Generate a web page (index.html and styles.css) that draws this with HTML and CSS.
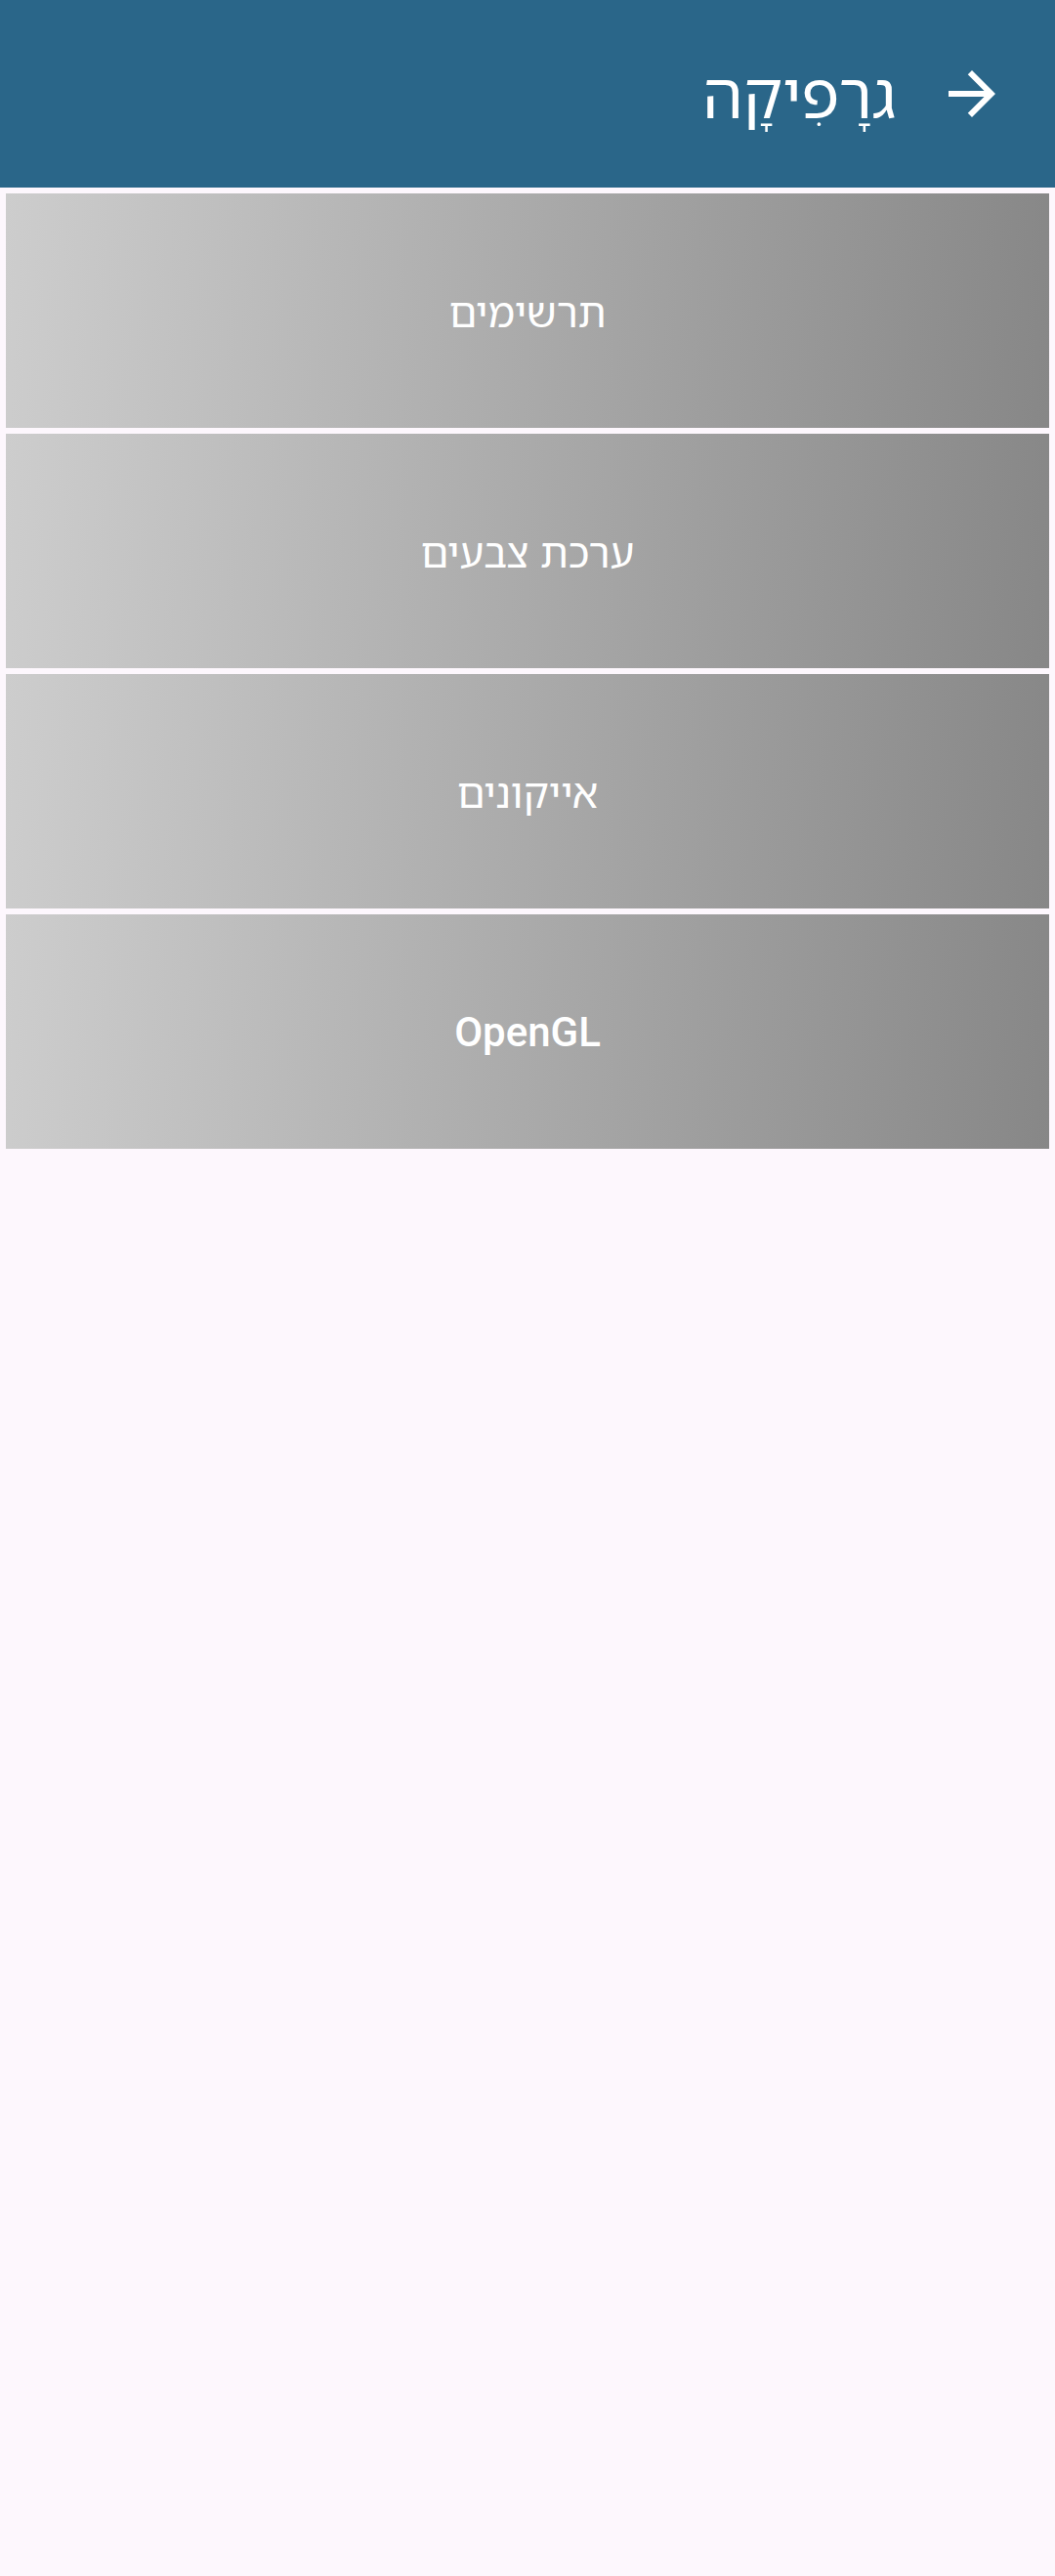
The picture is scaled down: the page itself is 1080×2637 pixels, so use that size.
FILE: index.html
```html
<!DOCTYPE html>
<html lang="he" dir="rtl">

<head>
    <meta charset="UTF-8">
    <meta name="viewport" content="width=device-width, initial-scale=1.0">
    <title>גרָפִיקָה</title>

    <link rel="stylesheet" href="styles.css">
</head>

<body>

    <header class="toolbar">
        <button class="toolbar__back" aria-label="חזרה">
            <svg viewBox="0 0 24 24" width="72" height="72">
                <path d="M12 4l-1.41 1.41L16.17 11H4v2h12.17l-5.58 5.59L12 20l8-8z" fill="#fff" />
            </svg>
        </button>
        <h1 class="toolbar__title">גרָפִיקָה</h1>
    </header>
    <!--/toolbar-->

    <main class="menu">
        <a class="menu__item" href="#">תרשימים</a>
        <a class="menu__item" href="#">ערכת צבעים</a>
        <a class="menu__item" href="#">אייקונים</a>
        <a class="menu__item menu__item--latin" href="#">OpenGL</a>
    </main>
    <!--/menu-->

</body>

</html>
```

FILE: styles.css
```css
body {
    margin: 0;
    background: #fdf7fd;
    font-family: "Noto Sans Hebrew", "Open Sans", "DejaVu Sans", sans-serif;
}

.toolbar {
    display: flex;
    align-items: center;
    height: 192px;
    padding-right: 49px;
    background: #2a6689;
    color: #fff;
}

.toolbar__back {
    display: flex;
    padding: 0;
    margin: 0 0 0 42px;
    border: 0;
    background: none;
    cursor: pointer;
}

.toolbar__title {
    margin: 0;
    font-size: 65px;
    font-weight: 400;
}

.menu {
    display: flex;
    flex-direction: column;
    gap: 6px;
    padding: 6px;
}

.menu__item {
    display: flex;
    align-items: center;
    justify-content: center;
    height: 240px;
    background: linear-gradient(93deg, #cdcdcd, #878787);
    color: #fff;
    font-size: 42px;
    text-decoration: none;
}

.menu__item--latin {
    font-family: Roboto, "Liberation Sans", sans-serif;
    font-weight: 500;
}
```
